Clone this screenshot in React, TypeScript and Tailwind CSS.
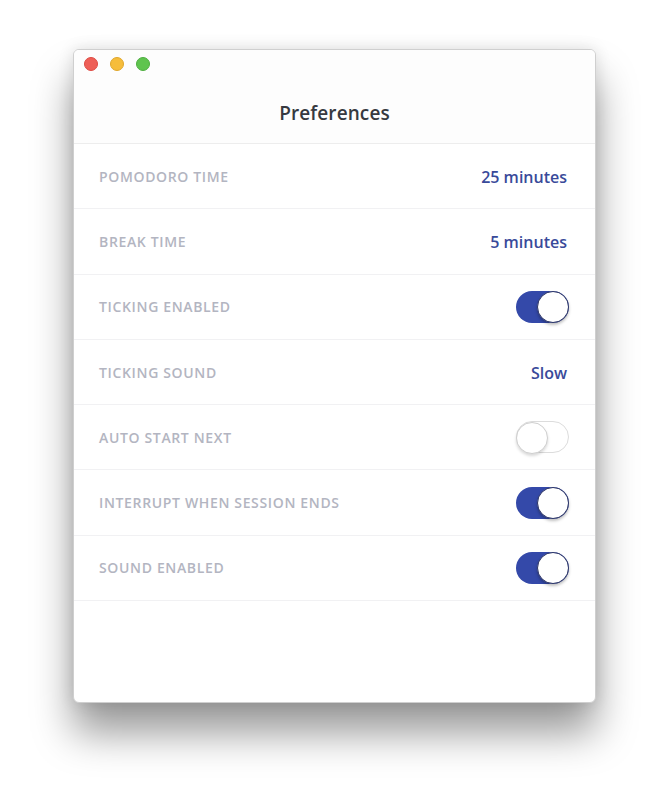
import React from 'react';

type Row = {
  label: string;
  value?: string;
  toggle?: boolean;
};

const rows: Row[] = [
  { label: 'Pomodoro Time', value: '25 minutes' },
  { label: 'Break Time', value: '5 minutes' },
  { label: 'Ticking Enabled', toggle: true },
  { label: 'Ticking Sound', value: 'Slow' },
  { label: 'Auto Start Next', toggle: false },
  { label: 'Interrupt When Session Ends', toggle: true },
  { label: 'Sound Enabled', toggle: true },
];

function Toggle({ on }: { on: boolean }) {
  return (
    <div
      className={`relative w-[53px] h-[32px] rounded-full ${
        on ? 'bg-[#3449a9]' : 'bg-white border border-[#dcdcdc]'
      }`}
    >
      <div
        className={`absolute top-0 w-[32px] h-[32px] rounded-full bg-white ${
          on
            ? 'right-0 border-[1.5px] border-[#2c3566] shadow-[0_2px_3px_rgba(0,0,0,0.25)]'
            : '-left-px -top-px border-[1.5px] border-[#cfcfcf] shadow-[0_2px_3px_rgba(0,0,0,0.15)]'
        }`}
      />
    </div>
  );
}

export default function App() {
  return (
    <div className="w-[669px] h-[800px] bg-white pt-[49px] pl-[73px] font-['Open_Sans','Liberation_Sans',sans-serif]">
      <div className="w-[523px] h-[654px] bg-white rounded-[6px] border border-[#cfcfcf] shadow-[0_30px_40px_rgba(0,0,0,0.4),0_0_16px_rgba(0,0,0,0.12)] overflow-hidden flex flex-col">
        {/* Title bar */}
        <div className="h-[94px] bg-[#fdfdfd] border-b border-[#ededed] flex flex-col">
          <div className="flex gap-[12px] pl-[10px] pt-[7px]">
            <span className="w-[14px] h-[14px] rounded-full bg-[#ee5f57] border border-[#de4a42]" />
            <span className="w-[14px] h-[14px] rounded-full bg-[#f6bd3b] border border-[#e0a72b]" />
            <span className="w-[14px] h-[14px] rounded-full bg-[#5fc44e] border border-[#4eae3f]" />
          </div>
          <div className="text-center mt-[28px] text-[19px] font-semibold text-[#363940] tracking-[0.1px]">
            Preferences
          </div>
        </div>

        {/* Settings */}
        <div className="flex flex-col">
          {rows.map(row => (
            <div
              key={row.label}
              className="h-[65.3px] flex items-center justify-between pl-[25px] pr-[26px] border-b border-[#f1f1f3]"
            >
              <span className="text-[14px] font-semibold uppercase tracking-[0.65px] text-[#b3b5c1]">
                {row.label}
              </span>
              {row.value !== undefined ? (
                <span className="text-[16px] font-semibold text-[#394a9a] pr-[2px] mt-[2px]">{row.value}</span>
              ) : (
                <Toggle on={!!row.toggle} />
              )}
            </div>
          ))}
        </div>
      </div>
    </div>
  );
}
